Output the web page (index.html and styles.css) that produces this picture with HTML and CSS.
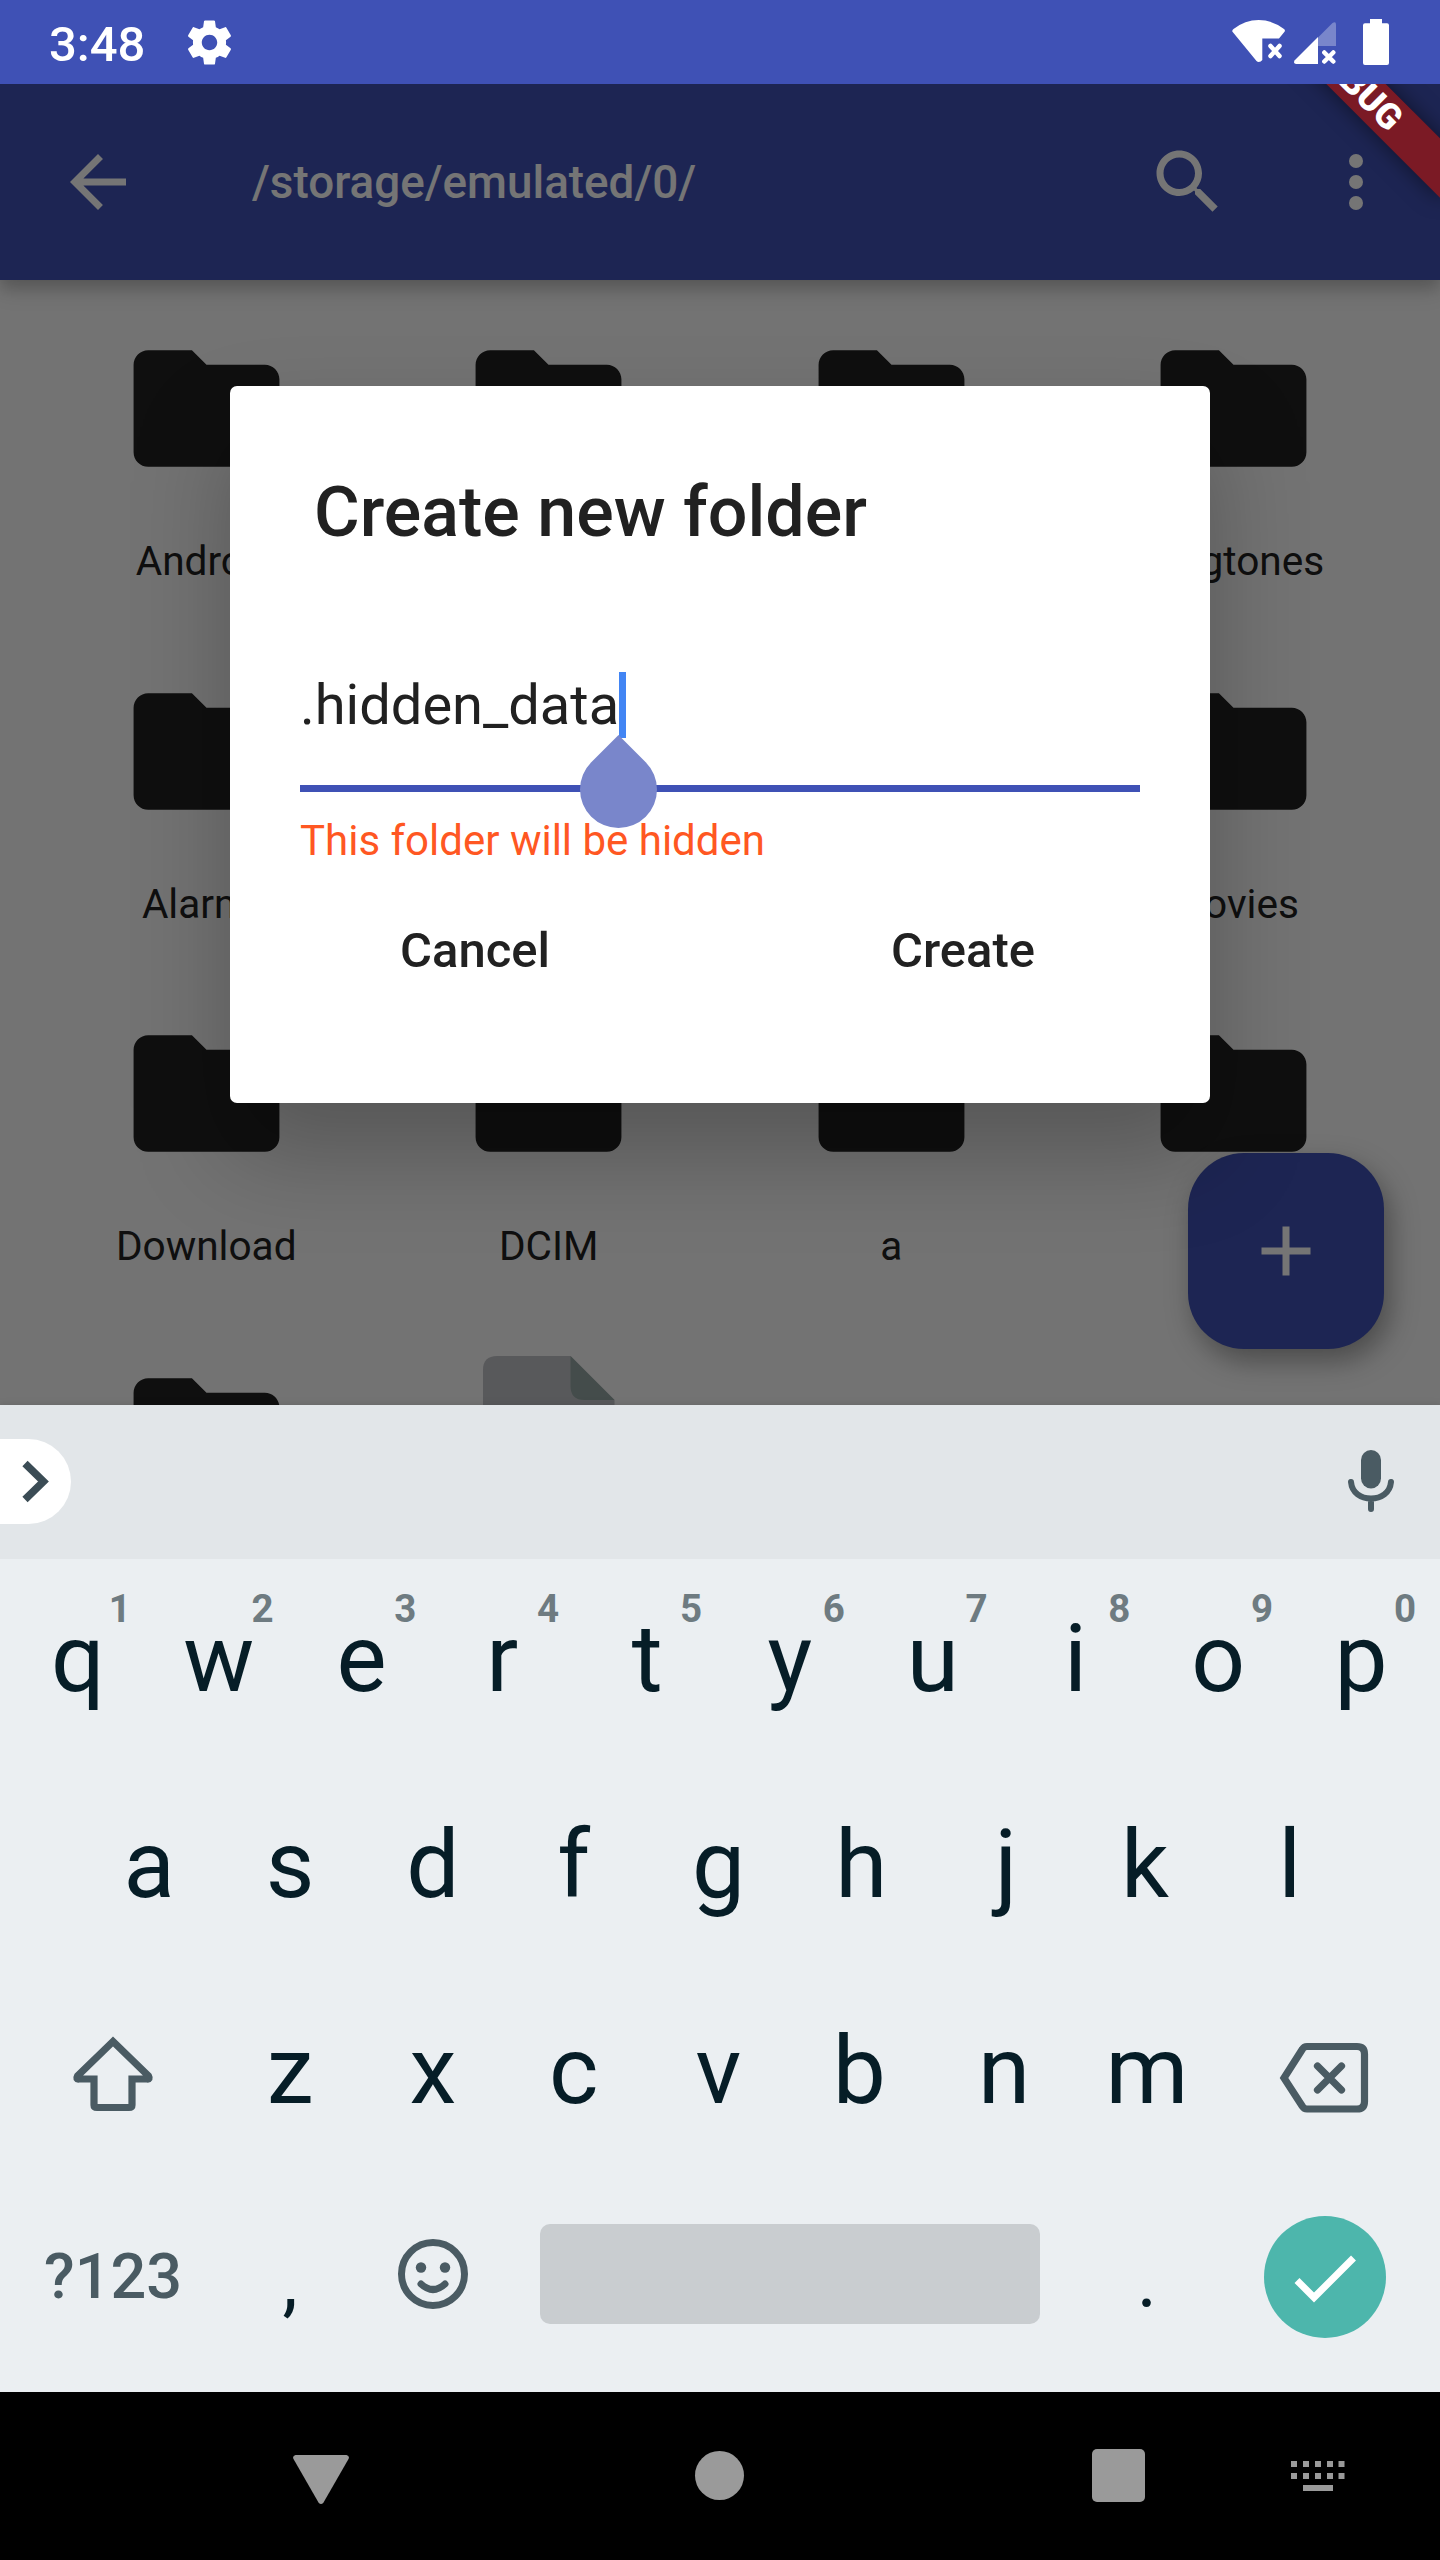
FILE: index.html
```html
<!DOCTYPE html>
<html lang="en">
<head>
<meta charset="utf-8">
<title>Create new folder</title>
<link rel="stylesheet" href="styles.css">
</head>
<body>
<svg class="defs" width="0" height="0">
  <symbol id="folder" viewBox="0 0 24 24"><path d="M10 4H4C2.900 4 2 4.900 2 6V18C2 19.100 2.900 20 4 20H20C21.100 20 22 19.100 22 18V8C22 6.900 21.100 6 20 6H12L10 4Z"/></symbol>
</svg>
<div class="phone">
  <header class="status">
    <span class="clock">3:48</span>
    <svg class="gear" width="53" height="53" viewBox="0 0 24 24"><path d="M19.430 12.980c.04-.32.07-.64.07-.98s-.03-.66-.07-.98l2.110-1.650c.19-.15.24-.42.12-.64l-2-3.460c-.12-.22-.39-.3-.61-.22l-2.490 1c-.52-.4-1.080-.73-1.690-.98l-.38-2.650C14.460 2.180 14.250 2 14 2h-4c-.25 0-.46.18-.49.42l-.38 2.650c-.61.25-1.170.59-1.690.98l-2.490-1c-.23-.09-.49 0-.61.22l-2 3.460c-.13.22-.07.49.12.64l2.110 1.650c-.04.32-.07.65-.07.98s.03.66.07.98l-2.110 1.650c-.19.15-.24.42-.12.64l2 3.460c.12.22.39.3.61.22l2.490-1c.52.4 1.080.73 1.690.98l.38 2.650c.03.24.24.42.49.42h4c.25 0 .46-.18.49-.42l.38-2.650c.61-.25 1.170-.59 1.690-.98l2.490 1c.23.09.49 0 .61-.22l2-3.460c.12-.22.07-.49-.12-.64l-2.110-1.650zM12 15.500c-1.930 0-3.500-1.570-3.500-3.500s1.570-3.500 3.500-3.500 3.500 1.570 3.500 3.500-1.570 3.500-3.500 3.500z"/></svg>
    <svg class="signals" width="158" height="84" viewBox="1232 0 158 84">
      <path d="M1232.300 31.500Q1232 30 1233.500 29Q1245 20 1258.700 20T1284 29Q1285.400 30 1284.700 31.500L1279 38.500H1262.300V60Q1261 62 1258.700 62Q1257.500 62 1256.500 61Z"/>
      <path class="cross" d="M1270.500 46l9 10M1279.500 46l-9 10M1324.300 52.500l9 9M1333.300 52.500l-9 9"/>
      <path class="dim" d="M1318 37.500L1332.500 23Q1336 21 1336 24.500V46H1318Z"/>
      <path d="M1318 37V64H1296Q1293 63.500 1294.500 60.500Z"/>
      <path d="M1370 19H1382V23.300H1387Q1389 23.300 1389 25.300V63Q1389 65 1387 65H1365Q1363 65 1363 63V25.300Q1363 23.300 1365 23.300H1370Z"/>
    </svg>
  </header>

  <main class="window">
    <div class="appbar">
      <svg width="84" height="84" viewBox="0 0 24 24"><path d="M20 11H7.830l5.590-5.590L12 4l-8 8 8 8 1.410-1.410L7.830 13H20v-2z"/></svg>
      <h1 class="path">/storage/emulated/0/</h1>
      <svg width="84" height="84" viewBox="0 0 24 24"><path d="M15.500 14h-.79l-.28-.27C15.410 12.590 16 11.110 16 9.500 16 5.910 13.090 3 9.500 3S3 5.910 3 9.500 5.910 16 9.500 16c1.610 0 3.090-.59 4.230-1.570l.27.28v.79l5 4.990L20.490 19l-4.990-5zm-6 0C7.010 14 5 11.990 5 9.500S7.010 5 9.500 5 14 7.010 14 9.500 11.990 14 9.500 14z"/></svg>
      <svg width="84" height="84" viewBox="0 0 24 24"><circle cx="12" cy="6" r="2"/><circle cx="12" cy="12" r="2"/><circle cx="12" cy="18" r="2"/></svg>
    </div>
    <div class="files">
      <div class="item"><svg class="icon"><use href="#folder"/></svg><span>Android</span></div>
      <div class="item"><svg class="icon"><use href="#folder"/></svg></div>
      <div class="item"><svg class="icon"><use href="#folder"/></svg></div>
      <div class="item"><svg class="icon"><use href="#folder"/></svg><span>Ringtones</span></div>
      <div class="item"><svg class="icon"><use href="#folder"/></svg><span>Alarms</span></div>
      <div class="item"><svg class="icon"><use href="#folder"/></svg></div>
      <div class="item"><svg class="icon"><use href="#folder"/></svg></div>
      <div class="item"><svg class="icon"><use href="#folder"/></svg><span>Movies</span></div>
      <div class="item"><svg class="icon"><use href="#folder"/></svg><span>Download</span></div>
      <div class="item"><svg class="icon"><use href="#folder"/></svg><span>DCIM</span></div>
      <div class="item"><svg class="icon"><use href="#folder"/></svg><span>a</span></div>
      <div class="item"><svg class="icon"><use href="#folder"/></svg></div>
      <div class="item"><svg class="icon"><use href="#folder"/></svg></div>
      <div class="item">
        <svg class="icon" viewBox="0 0 175 175"><path class="sheet" d="M36 7H109.500L153.500 51V153Q153.500 167 139.500 167H36Q22 167 22 153V21Q22 7 36 7Z"/><path class="fold" d="M109.500 7L153.500 51H123.500Q109.500 51 109.500 37Z"/></svg>
      </div>
    </div>
    <div class="fab"><svg width="84" height="84" viewBox="0 0 24 24"><path d="M19 13h-6v6h-2v-6H5v-2h6V5h2v6h6v2z"/></svg></div>

    <div class="scrim">
      <section class="dialog">
        <h2>Create new folder</h2>
        <div class="field">
          <span class="value">.hidden_data</span><span class="caret"><i class="handle"></i></span>
        </div>
        <p class="hint">This folder will be hidden</p>
        <div class="actions"><button>Cancel</button><button>Create</button></div>
      </section>
    </div>
    <div class="banner">DEBUG</div>
  </main>

  <section class="keyboard">
    <div class="strip">
      <div class="expand"><svg width="71" height="85" viewBox="0 0 71 85"><path d="M25 24.500L43.500 42.500L25 60.500"/></svg></div>
      <svg class="mic" width="48" height="64" viewBox="0 0 48 64"><rect x="14" y="1" width="20" height="38.500" rx="10"/><path d="M4 33C5 44 14 49.500 24 49.500S43 44 44 33M24 50V60"/></svg>
    </div>
    <div class="rows">
      <div class="row">
        <b class="first">q<sup>1</sup></b><b>w<sup>2</sup></b><b>e<sup>3</sup></b><b class="nudge">r<sup>4</sup></b><b>t<sup>5</sup></b><b>y<sup>6</sup></b><b>u<sup>7</sup></b><b>i<sup>8</sup></b><b>o<sup>9</sup></b><b>p<sup>0</sup></b>
      </div>
      <div class="row">
        <b class="first">a</b><b>s</b><b>d</b><b class="nudge">f</b><b>g</b><b>h</b><b class="first">j</b><b class="nudge">k</b><b>l</b>
      </div>
      <div class="row">
        <b class="wide"><svg class="line" width="84" height="80" viewBox="71 2034 84 80"><path d="M113 2041.500L77.500 2076Q75.500 2079.500 79 2079H94V2105Q94 2107.500 97 2107.500H129Q132 2107.500 132 2105V2079H147Q150.500 2079.500 148.500 2076Z"/></svg></b>
        <b>z</b><b>x</b><b class="nudge">c</b><b>v</b><b class="nudge">b</b><b>n</b><b>m</b>
        <b class="wide"><svg class="line erase" width="92" height="74" viewBox="1278 2040 92 74"><path d="M1284 2078L1302.500 2049Q1304 2046.500 1307 2046.500H1357Q1364.500 2046.500 1364.500 2054V2101.500Q1364.500 2109 1357 2109H1307Q1304 2109 1302.500 2106.500Z"/><path class="round" d="M1317.500 2066L1341.500 2090M1341.500 2066L1317.500 2090"/></svg></b>
      </div>
      <div class="row">
        <b class="wide symbols">?123</b>
        <b class="punct">,</b>
        <b><svg class="smile" width="72" height="72" viewBox="0 0 72 72"><circle class="ring" cx="36" cy="36" r="31.500"/><circle cx="24" cy="29.500" r="5.200"/><circle cx="48" cy="29.500" r="5.200"/><path class="ring" d="M24 46Q36 57 48 46"/></svg></b>
        <b class="space"></b>
        <b class="punct">.</b>
        <b class="wide"><span class="enter"><svg width="122" height="122" viewBox="0 0 122 122"><path d="M33 64.500L50 81.500L89.500 42"/></svg></span></b>
      </div>
    </div>
  </section>

  <nav class="nav">
    <svg class="back" width="56" height="49" viewBox="0 0 56 49"><path d="M2.500 0H53.500Q57 1 55.500 4L30.500 47.500Q28 50.500 25.500 47.500L.5 4Q-1 1 2.500 0Z"/></svg>
    <i class="home"></i>
    <i class="recent"></i>
    <svg class="ime" width="54" height="30" viewBox="0 0 54 30"><path d="M0 0h6v6H0zM12 0h6v6h-6zM24 0h6v6h-6zM36 0h6v6h-6zM47.500 0h6v6h-6zM0 12h6v6H0zM12 12h6v6h-6zM24 12h6v6h-6zM36 12h6v6h-6zM47.500 12h6v6h-6zM12 24h30v6H12z"/></svg>
  </nav>
</div>
</body>
</html>
```
FILE: styles.css
```css
* { box-sizing: border-box; }
body { margin: 0; font-family: Roboto, sans-serif; }
h1, h2, p { margin: 0; font-weight: 500; }
svg { display: block; flex: none; }
.defs { position: absolute; }

.phone { width: 1440px; height: 2560px; display: flex; flex-direction: column; overflow: hidden; }

/* status bar */
.status { height: 84px; flex: none; display: flex; align-items: center; padding: 0 50px 0 49px; background: #3f51b5; color: #fff; fill: #fff; }
.clock { font-size: 49px; line-height: 57px; font-weight: 500; margin-top: 4px; }
.gear { margin-left: 38px; }
.signals { margin-left: auto; }
.signals .cross { stroke: #fff; stroke-width: 4.500; stroke-linecap: round; fill: none; }
.signals .dim { fill: #7986cb; }

/* app window */
.window { position: relative; height: 1321px; flex: none; overflow: hidden; background: #fafafa; }
.appbar { position: relative; height: 196px; display: flex; align-items: center; gap: 84px; padding: 0 42px 0 56px; background: #3f51b5; fill: #fff; color: #fff; box-shadow: 0 7px 14px rgba(0,0,0,.15), 0 12px 20px rgba(0,0,0,.12); }
.path { flex: 1; margin-left: 28px; font-size: 45.800px; line-height: 57px; }

.files { display: grid; grid-template-columns: repeat(4, 342.5px); grid-auto-rows: 342.7px; padding: 35px; }
.item { display: flex; flex-direction: column; align-items: center; gap: 41px; padding-top: 6px; font-size: 40.600px; line-height: 49px; color: #212121; }
.icon { width: 175px; height: 175px; fill: #212121; }
.sheet { fill: #c0c2c6; }
.fold { fill: #94a7a3; }

.fab { position: absolute; right: 56px; bottom: 56px; width: 196px; height: 196px; border-radius: 56px; display: flex; align-items: center; justify-content: center; background: #3f51b5; fill: #fff; box-shadow: 6px 12px 28px rgba(0,0,0,.35); }

.scrim { position: absolute; inset: 0; display: flex; align-items: center; justify-content: center; background: rgba(0,0,0,.54); }
.dialog { width: 980px; height: 717px; padding: 84px 70px 0; border-radius: 7px; background: #fff; color: #212121; box-shadow: 0 50px 96px rgba(0,0,0,.25); }
.dialog h2 { margin-left: 14px; font-size: 70px; line-height: 84px; }
.field { display: flex; height: 122px; margin-top: 116px; border-bottom: 7px solid #3f51b5; }
.value { font-size: 56px; line-height: 66px; margin-top: 2px; }
.caret { position: relative; width: 7px; height: 66px; margin-top: 2px; background: #4285f4; }
.handle { position: absolute; left: -39px; top: 79px; width: 77px; height: 77px; border-radius: 0 50% 50% 50%; background: #7986cb; transform: rotate(45deg); }
.hint { margin-top: 24px; font-size: 42px; line-height: 50px; font-weight: 400; color: #ff5722; }
.actions { display: flex; gap: 138px; margin: 56px 0 0; }
.actions button { width: 350px; border: 0; padding: 0; background: none; font: 500 49px/58px Roboto, sans-serif; color: #212121; }

.banner { position: absolute; right: -56px; top: -21px; width: 280px; height: 42px; background: #7b1a25; color: #fff; font-size: 35.700px; line-height: 42px; font-weight: 900; text-align: center; transform: rotate(45deg); box-shadow: 0 0 21px rgba(0,0,0,.5); }

/* keyboard */
.keyboard { position: relative; height: 987px; flex: none; background: #ebeff2; box-shadow: 0 0 8px rgba(0,0,0,.12); }
.strip { height: 154px; display: flex; align-items: center; justify-content: space-between; padding: 0 45px 2px 0; background: #e2e6e9; }
.expand { width: 71px; height: 85px; border-radius: 0 43px 43px 0; background: #fff; }
.expand path { fill: none; stroke: #3b4c55; stroke-width: 7.500; }
.mic { fill: #4a5b63; }
.mic path { fill: none; stroke: #4a5b63; stroke-width: 6; stroke-linecap: round; }
.rows { display: flex; flex-direction: column; gap: 6px; }
.row { display: flex; justify-content: center; height: 200px; }
.row b { position: relative; width: 142.800px; height: 200px; padding-right: 3px; display: flex; align-items: center; justify-content: center; font-size: 94.500px; line-height: 200px; font-weight: 400; color: #061d27; }
.row .first { padding: 0 0 0 1px; }
.row .nudge { padding-right: 7px; }
.row .wide { width: 214.200px; }
.row .wide:first-child { padding: 0; }
.row sup { position: absolute; right: 18px; top: 27px; font-size: 38.500px; line-height: 46px; font-weight: 700; color: #6e7b81; }
.line { fill: none; stroke: #4a5b63; stroke-width: 7.200; margin-top: 5px; }
.erase { margin: 11px 3px 0 0; }
.round { stroke-linecap: round; }
.smile { fill: #4a5b63; margin-bottom: 6px; }
.ring { fill: none; stroke: #4a5b63; stroke-width: 7; stroke-linecap: round; }
.row .symbols { font-size: 63px; font-weight: 500; color: #4a5b63; }
.row .punct { font-size: 77px; padding-top: 8px; }
.row .space { width: 500px; height: 100px; margin: 47px 36.600px 0 34.600px; border-radius: 10px; background: #c9cdd0; }
.enter { width: 122px; height: 122px; border-radius: 50%; background: #4db6ac; }
.enter path { fill: none; stroke: #fff; stroke-width: 7; }

/* navigation bar */
.nav { flex: 1; display: flex; padding: 57px 0 0 293px; background: #000; fill: #9a9a9a; }
.back { margin-top: 6px; }
.home { width: 49px; height: 49px; margin: 2px 0 0 346px; border-radius: 50%; background: #9a9a9a; }
.recent { width: 53px; height: 53px; margin-left: 347.500px; border-radius: 5px; background: #9a9a9a; }
.ime { margin: 12px 0 0 146.500px; }
```
